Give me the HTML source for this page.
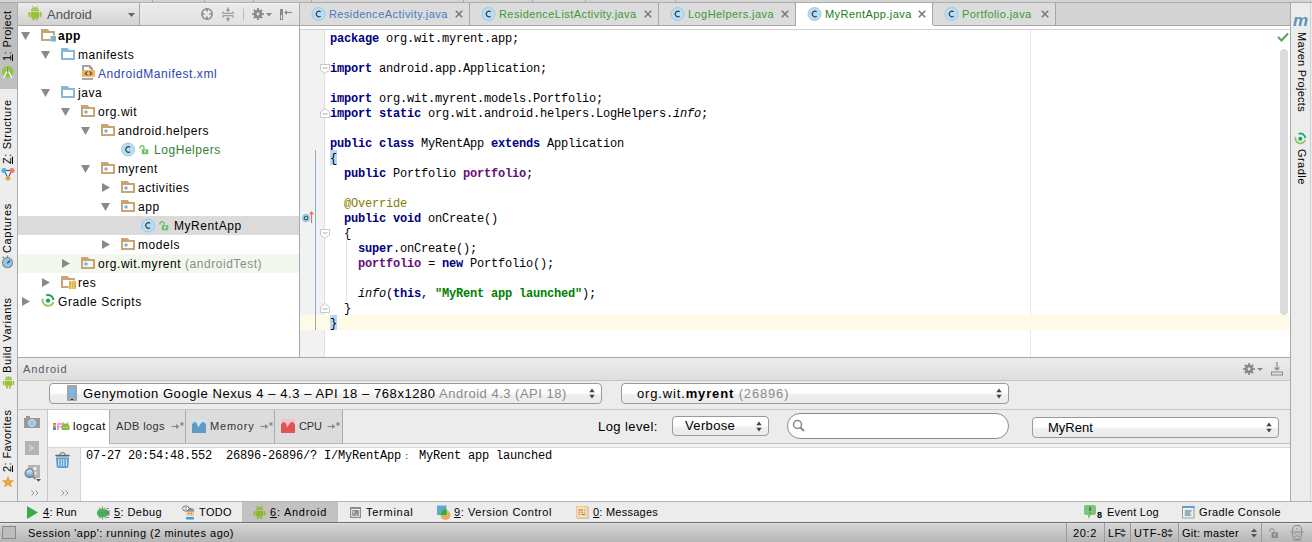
<!DOCTYPE html><html><head><meta charset="utf-8"><style>

html,body{margin:0;padding:0}
body{width:1312px;height:542px;overflow:hidden;position:relative;background:#ececec;font-family:'Liberation Sans', sans-serif;font-size:12px;color:#000}
.ab{position:absolute}
.t{position:absolute;white-space:pre;line-height:1}
svg{position:absolute;overflow:visible}

</style></head><body>
<div class="ab" style="left:0px;top:0px;width:1312px;height:2px;background:#d4d4d4"></div>
<div class="ab" style="left:0px;top:2px;width:1312px;height:1px;background:#acacac"></div>
<div class="ab" style="left:152px;top:0px;width:1px;height:2px;background:#aaaaaa"></div>
<div class="ab" style="left:204px;top:0px;width:1px;height:2px;background:#aaaaaa"></div>
<div class="ab" style="left:253px;top:0px;width:1px;height:2px;background:#aaaaaa"></div>
<div class="ab" style="left:311px;top:0px;width:1px;height:2px;background:#aaaaaa"></div>
<div class="ab" style="left:463px;top:0px;width:1px;height:2px;background:#aaaaaa"></div>
<div class="ab" style="left:532px;top:0px;width:1px;height:2px;background:#aaaaaa"></div>
<div class="ab" style="left:585px;top:0px;width:1px;height:2px;background:#aaaaaa"></div>
<div class="ab" style="left:675px;top:0px;width:1px;height:2px;background:#aaaaaa"></div>
<div class="ab" style="left:0px;top:3px;width:17px;height:498px;background:#ececec"></div>
<div class="ab" style="left:17px;top:3px;width:1px;height:498px;background:#acacac"></div>
<div class="ab" style="left:0px;top:3px;width:17px;height:86px;background:#c0c0c0"></div>
<div class="ab" style="left:18px;top:3px;width:282px;height:22px;background:linear-gradient(#ebebeb,#e2e2e2)"></div>
<div class="ab" style="left:18px;top:3px;width:282px;height:1px;background:#f6f6f6"></div>
<div class="ab" style="left:18px;top:25px;width:282px;height:1px;background:#a8a8a8"></div>
<div class="ab" style="left:18px;top:26px;width:281px;height:331px;background:#fff"></div>
<div class="ab" style="left:299px;top:3px;width:1px;height:354px;background:#a8a8a8"></div>
<div class="ab" style="left:18px;top:216px;width:281px;height:19px;background:#dbdbdb"></div>
<div class="ab" style="left:18px;top:254px;width:281px;height:19px;background:#f2f8ee"></div>
<svg style="left:21px;top:32px" width="9" height="8" viewBox="0 0 9 8"><path d="M0 0H9L4.5 8Z" fill="#8a8a8a"/></svg>
<svg style="left:41px;top:29px" width="16" height="14" viewBox="0 0 16 14"><path d="M0 0H6.5L8.5 2H14V12H0ZM2 4V10H12V4Z" fill="#c9a575" fill-rule="evenodd"/><rect x="9" y="6.5" width="6" height="6" fill="#fff"/><rect x="9.5" y="7" width="5.5" height="5.5" fill="#7ab3d6"/></svg>
<div class="t" style="left:58px;top:30px;font-size:12px;letter-spacing:0.55px;font-weight:bold">app</div>
<svg style="left:41px;top:51px" width="9" height="8" viewBox="0 0 9 8"><path d="M0 0H9L4.5 8Z" fill="#8a8a8a"/></svg>
<svg style="left:61px;top:48px" width="15" height="13" viewBox="0 0 15 13"><path d="M0 0H6.5L8.5 2H14V12H0ZM2 4V10H12V4Z" fill="#86b8d8" fill-rule="evenodd"/></svg>
<div class="t" style="left:78px;top:49px;font-size:12px;letter-spacing:0.55px;">manifests</div>
<svg style="left:82px;top:65px" width="14" height="16" viewBox="0 0 14 16"><path d="M0 0H8L11 3V5H9V4H7V2H2V5H0Z" fill="#a4a4a4"/><rect x="0" y="5" width="13" height="6.8" fill="#f2b458"/><path d="M5.4 6.4L3.3 8.4L5.4 10.4M7.6 6.4L9.7 8.4L7.6 10.4" fill="none" stroke="#4a4a4a" stroke-width="1.2"/><rect x="0" y="12.9" width="11" height="2" fill="#a4a4a4"/></svg>
<div class="t" style="left:98px;top:68px;font-size:12px;letter-spacing:0.55px;color:#2846b4">AndroidManifest.xml</div>
<svg style="left:41px;top:89px" width="9" height="8" viewBox="0 0 9 8"><path d="M0 0H9L4.5 8Z" fill="#8a8a8a"/></svg>
<svg style="left:61px;top:86px" width="15" height="13" viewBox="0 0 15 13"><path d="M0 0H6.5L8.5 2H14V12H0ZM2 4V10H12V4Z" fill="#86b8d8" fill-rule="evenodd"/></svg>
<div class="t" style="left:78px;top:87px;font-size:12px;letter-spacing:0.55px;">java</div>
<svg style="left:61px;top:108px" width="9" height="8" viewBox="0 0 9 8"><path d="M0 0H9L4.5 8Z" fill="#8a8a8a"/></svg>
<svg style="left:81px;top:105px" width="15" height="13" viewBox="0 0 15 13"><path d="M0 0H6.5L8.5 2H14V12H0ZM2 4V10H12V4Z" fill="#c9a575" fill-rule="evenodd"/><circle cx="5" cy="7" r="1.8" fill="#80b2d6"/></svg>
<div class="t" style="left:98px;top:106px;font-size:12px;letter-spacing:0.55px;">org.wit</div>
<svg style="left:81px;top:127px" width="9" height="8" viewBox="0 0 9 8"><path d="M0 0H9L4.5 8Z" fill="#8a8a8a"/></svg>
<svg style="left:101px;top:124px" width="15" height="13" viewBox="0 0 15 13"><path d="M0 0H6.5L8.5 2H14V12H0ZM2 4V10H12V4Z" fill="#c9a575" fill-rule="evenodd"/><circle cx="5" cy="7" r="1.8" fill="#80b2d6"/></svg>
<div class="t" style="left:118px;top:125px;font-size:12px;letter-spacing:0.55px;">android.helpers</div>
<svg style="left:121px;top:142px" width="15" height="15" viewBox="0 0 15 15"><circle cx="7" cy="7.5" r="6.5" fill="#b8def4" stroke="#94cbee" stroke-width="1"/><path d="M9.2 5.4A2.7 2.7 0 1 0 9.2 9.6" fill="none" stroke="#3a3a3a" stroke-width="1.1"/></svg>
<svg style="left:139px;top:145px" width="10" height="10" viewBox="0 0 10 10"><path d="M1 3.5V2.6A2 2 0 0 1 5 2.6V4.5" fill="none" stroke="#6cbf6c" stroke-width="1.3"/><rect x="2.8" y="4.3" width="6.5" height="5" rx="0.8" fill="#6cbf6c"/><path d="M5.2 5.9H6.9M6.05 5.9V7.9" stroke="#fff" stroke-width="0.9"/></svg>
<div class="t" style="left:154px;top:144px;font-size:12px;letter-spacing:0.55px;color:#2f7f2f">LogHelpers</div>
<svg style="left:81px;top:165px" width="9" height="8" viewBox="0 0 9 8"><path d="M0 0H9L4.5 8Z" fill="#8a8a8a"/></svg>
<svg style="left:101px;top:162px" width="15" height="13" viewBox="0 0 15 13"><path d="M0 0H6.5L8.5 2H14V12H0ZM2 4V10H12V4Z" fill="#c9a575" fill-rule="evenodd"/><circle cx="5" cy="7" r="1.8" fill="#80b2d6"/></svg>
<div class="t" style="left:118px;top:163px;font-size:12px;letter-spacing:0.55px;">myrent</div>
<svg style="left:102px;top:183px" width="8" height="9" viewBox="0 0 8 9"><path d="M0 0V9L8 4.5Z" fill="#8a8a8a"/></svg>
<svg style="left:121px;top:181px" width="15" height="13" viewBox="0 0 15 13"><path d="M0 0H6.5L8.5 2H14V12H0ZM2 4V10H12V4Z" fill="#c9a575" fill-rule="evenodd"/><circle cx="5" cy="7" r="1.8" fill="#80b2d6"/></svg>
<div class="t" style="left:138px;top:182px;font-size:12px;letter-spacing:0.55px;">activities</div>
<svg style="left:101px;top:203px" width="9" height="8" viewBox="0 0 9 8"><path d="M0 0H9L4.5 8Z" fill="#8a8a8a"/></svg>
<svg style="left:121px;top:200px" width="15" height="13" viewBox="0 0 15 13"><path d="M0 0H6.5L8.5 2H14V12H0ZM2 4V10H12V4Z" fill="#c9a575" fill-rule="evenodd"/><circle cx="5" cy="7" r="1.8" fill="#80b2d6"/></svg>
<div class="t" style="left:138px;top:201px;font-size:12px;letter-spacing:0.55px;">app</div>
<svg style="left:141px;top:218px" width="15" height="15" viewBox="0 0 15 15"><circle cx="7" cy="7.5" r="6.5" fill="#b8def4" stroke="#94cbee" stroke-width="1"/><path d="M9.2 5.4A2.7 2.7 0 1 0 9.2 9.6" fill="none" stroke="#3a3a3a" stroke-width="1.1"/></svg>
<svg style="left:159px;top:221px" width="10" height="10" viewBox="0 0 10 10"><path d="M1 3.5V2.6A2 2 0 0 1 5 2.6V4.5" fill="none" stroke="#6cbf6c" stroke-width="1.3"/><rect x="2.8" y="4.3" width="6.5" height="5" rx="0.8" fill="#6cbf6c"/><path d="M5.2 5.9H6.9M6.05 5.9V7.9" stroke="#fff" stroke-width="0.9"/></svg>
<div class="t" style="left:174px;top:220px;font-size:12px;letter-spacing:0.55px;">MyRentApp</div>
<svg style="left:102px;top:240px" width="8" height="9" viewBox="0 0 8 9"><path d="M0 0V9L8 4.5Z" fill="#8a8a8a"/></svg>
<svg style="left:121px;top:238px" width="15" height="13" viewBox="0 0 15 13"><path d="M0 0H6.5L8.5 2H14V12H0ZM2 4V10H12V4Z" fill="#c9a575" fill-rule="evenodd"/><circle cx="5" cy="7" r="1.8" fill="#80b2d6"/></svg>
<div class="t" style="left:138px;top:239px;font-size:12px;letter-spacing:0.55px;">models</div>
<svg style="left:62px;top:259px" width="8" height="9" viewBox="0 0 8 9"><path d="M0 0V9L8 4.5Z" fill="#8a8a8a"/></svg>
<svg style="left:81px;top:257px" width="15" height="13" viewBox="0 0 15 13"><path d="M0 0H6.5L8.5 2H14V12H0ZM2 4V10H12V4Z" fill="#c9a575" fill-rule="evenodd"/><circle cx="5" cy="7" r="1.8" fill="#80b2d6"/></svg>
<div class="t" style="left:98px;top:258px;font-size:12px;letter-spacing:0.55px;">org.wit.myrent <span style="color:#8c8c8c">(androidTest)</span></div>
<svg style="left:42px;top:278px" width="8" height="9" viewBox="0 0 8 9"><path d="M0 0V9L8 4.5Z" fill="#8a8a8a"/></svg>
<svg style="left:61px;top:276px" width="16" height="14" viewBox="0 0 16 14"><path d="M0 0H6.5L8.5 2H14V12H0ZM2 4V10H12V4Z" fill="#c9a575" fill-rule="evenodd"/><rect x="7.5" y="4.5" width="8" height="9" fill="#fff"/><rect x="8" y="5" width="7" height="8" fill="#f0b428"/><path d="M8 7.6H15M8 10.4H15" stroke="#a8a8a8" stroke-width="0.9"/><path d="M10.5 5V13M12.5 5V13" stroke="#ffe890" stroke-width="0.6"/></svg>
<div class="t" style="left:78px;top:277px;font-size:12px;letter-spacing:0.55px;">res</div>
<svg style="left:22px;top:297px" width="8" height="9" viewBox="0 0 8 9"><path d="M0 0V9L8 4.5Z" fill="#8a8a8a"/></svg>
<svg style="left:41px;top:293px" width="15" height="15" viewBox="0 0 15 15"><path d="M5.08 2.34A5.6 5.6 0 0 1 12.58 7.11" fill="none" stroke="#1aa860" stroke-width="2"/><path d="M12.41 9.05A5.6 5.6 0 0 1 1.74 5.68" fill="none" stroke="#8cc864" stroke-width="2"/><circle cx="7" cy="7.6" r="2.2" fill="#1aa860"/></svg>
<div class="t" style="left:58px;top:296px;font-size:12px;letter-spacing:0.55px;">Gradle Scripts</div>
<div class="ab" style="left:18px;top:3px;width:122px;height:22px;background:linear-gradient(#ebebeb,#d2d2d2);border-right:1px solid #a8a8a8;box-sizing:border-box"></div>
<svg style="left:28px;top:5px" width="14" height="16" viewBox="0 0 14 16"><path d="M4.2 0.8L5.2 2.4M9.8 0.8L8.8 2.4" stroke="#9bc13b" stroke-width="0.9"/><path d="M3 6.2A4 4 0 0 1 11 6.2Z" fill="#9bc13b"/><circle cx="5.4" cy="4.4" r="0.6" fill="#eee"/><circle cx="8.6" cy="4.4" r="0.6" fill="#eee"/><rect x="3" y="7" width="8" height="6.3" rx="0.6" fill="#9bc13b"/><rect x="0.4" y="7" width="2" height="5.3" rx="1" fill="#9bc13b"/><rect x="11.6" y="7" width="2" height="5.3" rx="1" fill="#9bc13b"/><rect x="4.4" y="12.5" width="1.9" height="3" rx="0.5" fill="#9bc13b"/><rect x="7.7" y="12.5" width="1.9" height="3" rx="0.5" fill="#9bc13b"/></svg>
<div class="t" style="left:47px;top:8px;font-size:13px;color:#505058">Android</div>
<svg style="left:128px;top:13px" width="7" height="4" viewBox="0 0 7 4"><path d="M0 0H7L3.5 4Z" fill="#666"/></svg>
<svg style="left:201px;top:8px" width="12" height="12" viewBox="0 0 12 12"><circle cx="6" cy="6" r="5.2" fill="none" stroke="#8a8a8a" stroke-width="1.5"/><path d="M6 1V3.6M6 8.4V11M1 6H3.6M8.4 6H11" stroke="#8a8a8a" stroke-width="1.7"/></svg>
<svg style="left:222px;top:7px" width="12" height="15" viewBox="0 0 12 15"><path d="M1 4.5V6.3H11V4.5M1 10.5V8.7H11V10.5" fill="none" stroke="#8a8a8a" stroke-width="1.1"/><path d="M6 0.5V4M6 11V14.5" stroke="#8a8a8a" stroke-width="1.1"/><path d="M3.8 2.6H8.2L6 5ZM3.8 12.4H8.2L6 10Z" fill="#8a8a8a"/></svg>
<div class="ab" style="left:243px;top:7px;width:1px;height:15px;background:linear-gradient(#e4e4e4,#b8b8b8 30%,#b8b8b8 70%,#e4e4e4)"></div>
<svg style="left:252px;top:8px" width="12" height="12" viewBox="0 0 12 12"><path d="M10.31 5.13 L11.93 5.10 L11.93 6.90 L10.31 6.87 L9.67 8.43 L10.83 9.56 L9.56 10.83 L8.43 9.67 L6.87 10.31 L6.90 11.93 L5.10 11.93 L5.13 10.31 L3.57 9.67 L2.44 10.83 L1.17 9.56 L2.33 8.43 L1.69 6.87 L0.07 6.90 L0.07 5.10 L1.69 5.13 L2.33 3.57 L1.17 2.44 L2.44 1.17 L3.57 2.33 L5.13 1.69 L5.10 0.07 L6.90 0.07 L6.87 1.69 L8.43 2.33 L9.56 1.17 L10.83 2.44 L9.67 3.57Z" fill="#8a8a8a"/><circle cx="6" cy="6" r="1.4" fill="#e6e6e6"/></svg>
<svg style="left:266px;top:13px" width="6" height="3.5" viewBox="0 0 6 3.5"><path d="M0 0H6L3 3.5Z" fill="#8a8a8a"/></svg>
<svg style="left:280px;top:9px" width="13" height="12" viewBox="0 0 13 12"><rect x="0" y="0" width="3" height="11" fill="#8a8a8a"/><rect x="1" y="6" width="1" height="4" fill="#f0f0f0"/><path d="M5 3.5H12" stroke="#8a8a8a" stroke-width="1.2"/><path d="M4 3.5L7 1V6Z" fill="#8a8a8a"/></svg>
<div class="ab" style="left:300px;top:3px;width:991px;height:22px;background:#d3d3d3"></div>
<div class="ab" style="left:300px;top:25px;width:991px;height:1px;background:#a8a8a8"></div>
<div class="ab" style="left:300px;top:26px;width:991px;height:3px;background:#ffffff"></div>
<div class="ab" style="left:300px;top:29px;width:991px;height:1px;background:#d0d0d0"></div>
<div class="ab" style="left:300px;top:30px;width:991px;height:327px;background:#fff"></div>
<div class="ab" style="left:300px;top:3px;width:170px;height:22px;background:#dcdcdc"></div>
<div class="ab" style="left:469px;top:3px;width:1px;height:22px;background:#a8a8a8"></div>
<svg style="left:311px;top:7px" width="15" height="15" viewBox="0 0 15 15"><circle cx="7.5" cy="7" r="6.5" fill="#b8def4" stroke="#94cbee" stroke-width="1"/><path d="M9.7 4.9A2.7 2.7 0 1 0 9.7 9.1" fill="none" stroke="#3a3a3a" stroke-width="1.1"/></svg>
<div class="t" style="left:329px;top:9px;font-size:11px;letter-spacing:0.43px;color:#4a78c0">ResidenceActivity.java</div>
<svg style="left:455px;top:10.3px" width="8" height="8" viewBox="0 0 8 8"><path d="M0.8 0.8L7.2 7.2M7.2 0.8L0.8 7.2" stroke="#7a7a7a" stroke-width="1.6"/></svg>
<div class="ab" style="left:470px;top:3px;width:189px;height:22px;background:#dcdcdc"></div>
<div class="ab" style="left:658px;top:3px;width:1px;height:22px;background:#a8a8a8"></div>
<svg style="left:481px;top:7px" width="15" height="15" viewBox="0 0 15 15"><circle cx="7.5" cy="7" r="6.5" fill="#b8def4" stroke="#94cbee" stroke-width="1"/><path d="M9.7 4.9A2.7 2.7 0 1 0 9.7 9.1" fill="none" stroke="#3a3a3a" stroke-width="1.1"/></svg>
<div class="t" style="left:499px;top:9px;font-size:11px;letter-spacing:0.43px;color:#3a9a3a">ResidenceListActivity.java</div>
<svg style="left:644px;top:10.3px" width="8" height="8" viewBox="0 0 8 8"><path d="M0.8 0.8L7.2 7.2M7.2 0.8L0.8 7.2" stroke="#7a7a7a" stroke-width="1.6"/></svg>
<div class="ab" style="left:659px;top:3px;width:137px;height:22px;background:#dcdcdc"></div>
<div class="ab" style="left:795px;top:3px;width:1px;height:22px;background:#a8a8a8"></div>
<svg style="left:670px;top:7px" width="15" height="15" viewBox="0 0 15 15"><circle cx="7.5" cy="7" r="6.5" fill="#b8def4" stroke="#94cbee" stroke-width="1"/><path d="M9.7 4.9A2.7 2.7 0 1 0 9.7 9.1" fill="none" stroke="#3a3a3a" stroke-width="1.1"/></svg>
<div class="t" style="left:688px;top:9px;font-size:11px;letter-spacing:0.43px;color:#3a9a3a">LogHelpers.java</div>
<svg style="left:781px;top:10.3px" width="8" height="8" viewBox="0 0 8 8"><path d="M0.8 0.8L7.2 7.2M7.2 0.8L0.8 7.2" stroke="#7a7a7a" stroke-width="1.6"/></svg>
<div class="ab" style="left:796px;top:3px;width:137px;height:26px;background:#ffffff"></div>
<div class="ab" style="left:932px;top:3px;width:1px;height:22px;background:#a8a8a8"></div>
<svg style="left:807px;top:7px" width="15" height="15" viewBox="0 0 15 15"><circle cx="7.5" cy="7" r="6.5" fill="#b8def4" stroke="#94cbee" stroke-width="1"/><path d="M9.7 4.9A2.7 2.7 0 1 0 9.7 9.1" fill="none" stroke="#3a3a3a" stroke-width="1.1"/></svg>
<div class="t" style="left:825px;top:9px;font-size:11px;letter-spacing:0.43px;color:#1a7a1a">MyRentApp.java</div>
<svg style="left:918px;top:10.3px" width="8" height="8" viewBox="0 0 8 8"><path d="M0.8 0.8L7.2 7.2M7.2 0.8L0.8 7.2" stroke="#7a7a7a" stroke-width="1.6"/></svg>
<div class="ab" style="left:933px;top:3px;width:123px;height:22px;background:#dcdcdc"></div>
<div class="ab" style="left:1055px;top:3px;width:1px;height:22px;background:#a8a8a8"></div>
<svg style="left:944px;top:7px" width="15" height="15" viewBox="0 0 15 15"><circle cx="7.5" cy="7" r="6.5" fill="#b8def4" stroke="#94cbee" stroke-width="1"/><path d="M9.7 4.9A2.7 2.7 0 1 0 9.7 9.1" fill="none" stroke="#3a3a3a" stroke-width="1.1"/></svg>
<div class="t" style="left:962px;top:9px;font-size:11px;letter-spacing:0.43px;color:#3a9a3a">Portfolio.java</div>
<svg style="left:1041px;top:10.3px" width="8" height="8" viewBox="0 0 8 8"><path d="M0.8 0.8L7.2 7.2M7.2 0.8L0.8 7.2" stroke="#7a7a7a" stroke-width="1.6"/></svg>
<div class="ab" style="left:299px;top:3px;width:1px;height:22px;background:#a8a8a8"></div>
<div class="ab" style="left:300px;top:30px;width:24px;height:327px;background:#f2f2f2"></div>
<div class="ab" style="left:324px;top:30px;width:1px;height:327px;background:#e0e0e0"></div>
<div class="ab" style="left:1030px;top:30px;width:1px;height:327px;background:#e8e8e8"></div>
<div class="ab" style="left:300px;top:315px;width:990px;height:15px;background:#fffae8"></div>
<div class="ab" style="left:330px;top:150px;width:7px;height:15px;background:#b8d8f8"></div>
<div class="ab" style="left:330px;top:315px;width:7px;height:15px;background:#b8d8f8"></div>
<div class="ab" style="left:346px;top:240px;width:1px;height:61px;background:#e2e2e2"></div>
<div class="t" style="left:330px;top:32px;font-family:'Liberation Mono', monospace;font-size:12px;letter-spacing:-0.2px;line-height:15px"><span style="color:#000080;font-weight:bold">package</span> org.wit.myrent.app;</div>
<div class="t" style="left:330px;top:62px;font-family:'Liberation Mono', monospace;font-size:12px;letter-spacing:-0.2px;line-height:15px"><span style="color:#000080;font-weight:bold">import</span> android.app.Application;</div>
<div class="t" style="left:330px;top:92px;font-family:'Liberation Mono', monospace;font-size:12px;letter-spacing:-0.2px;line-height:15px"><span style="color:#000080;font-weight:bold">import</span> org.wit.myrent.models.Portfolio;</div>
<div class="t" style="left:330px;top:107px;font-family:'Liberation Mono', monospace;font-size:12px;letter-spacing:-0.2px;line-height:15px"><span style="color:#000080;font-weight:bold">import</span> <span style="color:#000080;font-weight:bold">static</span> org.wit.android.helpers.LogHelpers.<i>info</i>;</div>
<div class="t" style="left:330px;top:137px;font-family:'Liberation Mono', monospace;font-size:12px;letter-spacing:-0.2px;line-height:15px"><span style="color:#000080;font-weight:bold">public</span> <span style="color:#000080;font-weight:bold">class</span> MyRentApp <span style="color:#000080;font-weight:bold">extends</span> Application</div>
<div class="t" style="left:330px;top:152px;font-family:'Liberation Mono', monospace;font-size:12px;letter-spacing:-0.2px;line-height:15px">{</div>
<div class="t" style="left:330px;top:167px;font-family:'Liberation Mono', monospace;font-size:12px;letter-spacing:-0.2px;line-height:15px">  <span style="color:#000080;font-weight:bold">public</span> Portfolio <span style="color:#660e7a;font-weight:bold">portfolio</span>;</div>
<div class="t" style="left:330px;top:197px;font-family:'Liberation Mono', monospace;font-size:12px;letter-spacing:-0.2px;line-height:15px">  <span style="color:#808000">@Override</span></div>
<div class="t" style="left:330px;top:212px;font-family:'Liberation Mono', monospace;font-size:12px;letter-spacing:-0.2px;line-height:15px">  <span style="color:#000080;font-weight:bold">public</span> <span style="color:#000080;font-weight:bold">void</span> onCreate()</div>
<div class="t" style="left:330px;top:227px;font-family:'Liberation Mono', monospace;font-size:12px;letter-spacing:-0.2px;line-height:15px">  {</div>
<div class="t" style="left:330px;top:242px;font-family:'Liberation Mono', monospace;font-size:12px;letter-spacing:-0.2px;line-height:15px">    <span style="color:#000080;font-weight:bold">super</span>.onCreate();</div>
<div class="t" style="left:330px;top:257px;font-family:'Liberation Mono', monospace;font-size:12px;letter-spacing:-0.2px;line-height:15px">    <span style="color:#660e7a;font-weight:bold">portfolio</span> = <span style="color:#000080;font-weight:bold">new</span> Portfolio();</div>
<div class="t" style="left:330px;top:287px;font-family:'Liberation Mono', monospace;font-size:12px;letter-spacing:-0.2px;line-height:15px">    <i>info</i>(<span style="color:#000080;font-weight:bold">this</span>, <span style="color:#008000;font-weight:bold">"MyRent app launched"</span>);</div>
<div class="t" style="left:330px;top:302px;font-family:'Liberation Mono', monospace;font-size:12px;letter-spacing:-0.2px;line-height:15px">  }</div>
<div class="t" style="left:330px;top:317px;font-family:'Liberation Mono', monospace;font-size:12px;letter-spacing:-0.2px;line-height:15px">}</div>
<div class="ab" style="left:315px;top:150px;width:1px;height:180px;background:#8aaccc"></div>
<svg style="left:320px;top:64px" width="10" height="10" viewBox="0 0 10 10"><path d="M0.5 0.5V6L5 9.5L9.5 6V0.5Z" fill="#fff" stroke="#c8c8c8"/><path d="M2.5 4H7.5" stroke="#aaa"/></svg>
<svg style="left:320px;top:108px" width="10" height="10" viewBox="0 0 10 10"><path d="M0.5 9.5V4L5 0.5L9.5 4V9.5Z" fill="#fff" stroke="#c8c8c8"/><path d="M2.5 6H7.5" stroke="#aaa"/></svg>
<svg style="left:320px;top:229px" width="10" height="10" viewBox="0 0 10 10"><path d="M0.5 0.5V6L5 9.5L9.5 6V0.5Z" fill="#fff" stroke="#c8c8c8"/><path d="M2.5 4H7.5" stroke="#aaa"/></svg>
<svg style="left:320px;top:303px" width="10" height="10" viewBox="0 0 10 10"><path d="M0.5 9.5V4L5 0.5L9.5 4V9.5Z" fill="#fff" stroke="#c8c8c8"/><path d="M2.5 6H7.5" stroke="#aaa"/></svg>
<svg style="left:301px;top:210px" width="14" height="14" viewBox="0 0 14 14"><circle cx="5" cy="8" r="4" fill="#86c8ee"/><circle cx="5" cy="8" r="1.7" fill="#a8e0ff" stroke="#555" stroke-width="1.1"/><path d="M10.5 13V3.5" stroke="#e07060" stroke-width="1.2"/><path d="M8 4.3L10.5 1L13 4.3Z" fill="#e07060"/></svg>
<svg style="left:1277px;top:32px" width="12" height="10" viewBox="0 0 12 10"><path d="M1 5L4.5 8.5L11 1.5" fill="none" stroke="#5aaa5a" stroke-width="2.2"/></svg>
<div class="ab" style="left:1280px;top:49px;width:8px;height:266px;background:#dcdcdc;border-radius:4px"></div>
<div class="ab" style="left:1290px;top:3px;width:1px;height:498px;background:#a8a8a8"></div>
<div class="ab" style="left:1291px;top:3px;width:21px;height:498px;background:#ececec"></div>
<div class="ab" style="left:1310px;top:3px;width:1px;height:498px;background:#d0d0d0"></div>
<div class="t" style="left:1293px;top:12px;font-size:17px;color:#5b92bb"><i><b>m</b></i></div>
<div class="t" style="left:1296px;top:31.5px;writing-mode:vertical-rl;font-size:11px;letter-spacing:0.3px">Maven Projects</div>
<svg style="left:1294px;top:132px" width="14" height="14" viewBox="0 0 14 14"><path d="M4.6 1.8A5 5 0 0 1 11.3 6.1" fill="none" stroke="#1aa860" stroke-width="1.8"/><path d="M11.2 7.9A5 5 0 0 1 1.6 4.9" fill="none" stroke="#8cc864" stroke-width="1.8"/><circle cx="6.3" cy="6.8" r="2" fill="#1aa860"/></svg>
<div class="t" style="left:1296px;top:149px;writing-mode:vertical-rl;font-size:11px;letter-spacing:0.45px">Gradle</div>
<div class="t" style="left:2px;top:61px;transform-origin:0 0;transform:rotate(-90deg);font-size:11px;letter-spacing:0.4px"><u>1</u>: Project</div>
<div class="t" style="left:2px;top:164px;transform-origin:0 0;transform:rotate(-90deg);font-size:11px;letter-spacing:0.6px"><u>Z</u>: Structure</div>
<div class="t" style="left:2px;top:252.5px;transform-origin:0 0;transform:rotate(-90deg);font-size:11px;letter-spacing:0.65px">Captures</div>
<div class="t" style="left:2px;top:373px;transform-origin:0 0;transform:rotate(-90deg);font-size:11px;letter-spacing:0.62px">Build Variants</div>
<div class="t" style="left:2px;top:472px;transform-origin:0 0;transform:rotate(-90deg);font-size:11px;letter-spacing:0.4px"><u>2</u>: Favorites</div>
<svg style="left:1px;top:65px" width="14" height="14" viewBox="0 0 14 14"><circle cx="6.7" cy="6.7" r="5.7" fill="#8dc63f"/><path d="M2.5 13L6.7 4.5L10.9 13" fill="none" stroke="#fafafa" stroke-width="1.4"/><path d="M6.7 3.2L5.5 6.5H7.9Z" fill="#666"/><rect x="6.1" y="2.2" width="1.2" height="1.2" fill="#777"/></svg>
<svg style="left:1px;top:167px" width="14" height="14" viewBox="0 0 14 14"><path d="M3 3.5H11M3 3.5L7 11M11 3.5L7 11" stroke="#444" stroke-width="1"/><circle cx="3" cy="3.5" r="2.6" fill="#5aaee0"/><circle cx="11" cy="3.5" r="2.6" fill="#ec7a7a"/><circle cx="7" cy="11.3" r="2.4" fill="#d8a45a"/></svg>
<svg style="left:1px;top:255px" width="14" height="14" viewBox="0 0 14 14"><circle cx="6.5" cy="7.7" r="5" fill="#8ccbf0" stroke="#8a8a8a" stroke-width="1.2"/><path d="M6.5 0.5V2.7M1.5 1.8L3 3.2" stroke="#8a8a8a" stroke-width="1.3"/><path d="M6.3 8.3L9 5.5" stroke="#445" stroke-width="1.3"/></svg>
<svg style="left:2px;top:375px" width="13" height="14" viewBox="0 0 13 14"><path d="M3 5A3.5 3.5 0 0 1 10 5Z" fill="#9bc13b"/><path d="M4 1.5L4.8 2.8M9 1.5L8.2 2.8" stroke="#9bc13b" stroke-width="0.8"/><rect x="3" y="5.8" width="7" height="5" fill="#9bc13b"/><rect x="0.8" y="5.8" width="1.7" height="4.5" rx="0.8" fill="#9bc13b"/><rect x="10.5" y="5.8" width="1.7" height="4.5" rx="0.8" fill="#9bc13b"/><rect x="4.2" y="10.5" width="1.7" height="3" fill="#9bc13b"/><rect x="7.1" y="10.5" width="1.7" height="3" fill="#9bc13b"/><circle cx="5" cy="3.7" r="0.5" fill="#fff"/><circle cx="8" cy="3.7" r="0.5" fill="#fff"/></svg>
<svg style="left:1px;top:475px" width="14" height="14" viewBox="0 0 14 14"><path d="M7 0.8L8.8 4.9L13.2 5.3L9.9 8.2L10.9 12.6L7 10.3L3.1 12.6L4.1 8.2L0.8 5.3L5.2 4.9Z" fill="#eba84a"/></svg>
<div class="ab" style="left:18px;top:357px;width:1273px;height:1px;background:#a8a8a8"></div>
<div class="ab" style="left:18px;top:358px;width:1273px;height:22px;background:linear-gradient(#ececec,#dedede)"></div>
<div class="ab" style="left:18px;top:380px;width:1273px;height:1px;background:#c4c4c4"></div>
<div class="t" style="left:23px;top:364px;font-size:11px;letter-spacing:0.95px;color:#5a5a66">Android</div>
<div class="ab" style="left:18px;top:381px;width:1273px;height:28px;background:#ececec"></div>
<div class="ab" style="left:18px;top:409px;width:1273px;height:1px;background:#c8c8c8"></div>
<div class="ab" style="left:49px;top:383px;width:553px;height:21px;background:linear-gradient(#ffffff 0%,#fdfdfd 45%,#eeeeee 60%,#ececec 100%);border:1px solid #9a9a9a;border-radius:4px;box-sizing:border-box"></div>
<svg style="left:589px;top:388.0px" width="6" height="11" viewBox="0 0 6 11"><path d="M0.3 4.2L3 0.5L5.7 4.2ZM0.3 6.8L3 10.5L5.7 6.8Z" fill="#444"/></svg>
<svg style="left:67px;top:385px" width="10" height="17" viewBox="0 0 10 17"><rect x="0" y="0" width="10" height="16" rx="1" fill="#a4a4a4"/><rect x="2" y="2.5" width="6" height="10.5" fill="#7ab8e0"/><rect x="4" y="14" width="2" height="1" fill="#222"/></svg>
<div class="t" style="left:83px;top:387px;font-size:13px;letter-spacing:0.566px">Genymotion Google Nexus 4 – 4.3 – API 18 – 768x1280</div>
<div class="t" style="left:439px;top:387px;font-size:13px;letter-spacing:0.5px;color:#8a8a8a">Android 4.3 (API 18)</div>
<div class="ab" style="left:621px;top:383px;width:388px;height:21px;background:linear-gradient(#ffffff 0%,#fdfdfd 45%,#eeeeee 60%,#ececec 100%);border:1px solid #9a9a9a;border-radius:4px;box-sizing:border-box"></div>
<svg style="left:996px;top:388.0px" width="6" height="11" viewBox="0 0 6 11"><path d="M0.3 4.2L3 0.5L5.7 4.2ZM0.3 6.8L3 10.5L5.7 6.8Z" fill="#444"/></svg>
<div class="t" style="left:637px;top:387px;font-size:13px;letter-spacing:0.85px">org.wit.<b>myrent</b> <span style="color:#8a8a8a">(26896)</span></div>
<div class="ab" style="left:18px;top:410px;width:29px;height:91px;background:#ececec"></div>
<div class="ab" style="left:47px;top:410px;width:1px;height:91px;background:#c8c8c8"></div>
<div class="ab" style="left:48px;top:410px;width:1242px;height:34px;background:#ececec"></div>
<div class="ab" style="left:109px;top:443px;width:1181px;height:1px;background:#c0c0c0"></div>
<div class="ab" style="left:48px;top:444px;width:1242px;height:3px;background:#f4f4f4"></div>
<div class="ab" style="left:48px;top:447px;width:1242px;height:1px;background:#d8d8d8"></div>
<div class="ab" style="left:48px;top:410px;width:61px;height:37px;background:#fff"></div>
<div class="ab" style="left:109px;top:410px;width:76px;height:34px;background:#dcdcdc;border-left:1px solid #acacac;border-bottom:1px solid #b8b8b8;box-sizing:border-box"></div>
<div class="ab" style="left:185px;top:410px;width:89px;height:34px;background:#dcdcdc;border-left:1px solid #acacac;border-bottom:1px solid #b8b8b8;box-sizing:border-box"></div>
<div class="ab" style="left:274px;top:410px;width:69px;height:34px;background:#dcdcdc;border-left:1px solid #acacac;border-bottom:1px solid #b8b8b8;box-sizing:border-box"></div>
<div class="ab" style="left:342px;top:410px;width:1px;height:34px;background:#acacac"></div>
<svg style="left:53px;top:421px" width="17" height="10" viewBox="0 0 17 10"><defs><linearGradient id="rb" x1="0" y1="0" x2="0" y2="1"><stop offset="0" stop-color="#e85050"/><stop offset="0.3" stop-color="#f0c040"/><stop offset="0.55" stop-color="#60c060"/><stop offset="0.8" stop-color="#5080e0"/><stop offset="1" stop-color="#a060c0"/></linearGradient></defs><rect x="0" y="2" width="3" height="7" fill="url(#rb)"/><path d="M4 2H10V4H6V5H9V6.5H6V9H4Z" fill="#f0a0e0"/><path d="M8.5 6A4 3.5 0 0 1 16.5 6V9H8.5Z" fill="#8ab840"/><path d="M9.5 1L11 3M15.5 1L14 3" stroke="#8ab840" stroke-width="0.9"/><circle cx="11" cy="6.3" r="0.6" fill="#fff"/><circle cx="14" cy="6.3" r="0.6" fill="#fff"/></svg>
<div class="t" style="left:73px;top:421px;font-size:11px;letter-spacing:0.6px">logcat</div>
<div class="t" style="left:116px;top:421px;font-size:11px;letter-spacing:0.39px;color:#333">ADB logs</div>
<svg style="left:171px;top:422px" width="13" height="8" viewBox="0 0 13 8"><path d="M0.5 4.5H7.5" stroke="#8a8a8a" stroke-width="1.1"/><path d="M5 2L8.5 4.5L5 7Z" fill="#8a8a8a"/><rect x="9.5" y="0.5" width="3" height="3" fill="#8a8a8a"/></svg>
<svg style="left:192px;top:419px" width="14" height="14" viewBox="0 0 14 14"><rect width="14" height="14" fill="#d2e4f0"/><path d="M0 14V5.5L1.5 3.5L2.5 2.5L3.5 4L4.5 3.5L6.2 8.5L8 5.5L10 3.2L11.5 3L13 4L14 6V14Z" fill="#5b9bc4"/></svg>
<div class="t" style="left:210px;top:421px;font-size:11px;letter-spacing:0.8px;color:#333">Memory</div>
<svg style="left:260px;top:422px" width="13" height="8" viewBox="0 0 13 8"><path d="M0.5 4.5H7.5" stroke="#8a8a8a" stroke-width="1.1"/><path d="M5 2L8.5 4.5L5 7Z" fill="#8a8a8a"/><rect x="9.5" y="0.5" width="3" height="3" fill="#8a8a8a"/></svg>
<svg style="left:281px;top:419px" width="14" height="14" viewBox="0 0 14 14"><rect width="14" height="14" fill="#f4c4c4"/><path d="M0 14V5.5L1.5 3.5L2.5 2.5L3.5 4L4.5 3.5L6.2 8.5L8 5.5L10 3.2L11.5 3L13 4L14 6V14Z" fill="#e05454"/></svg>
<div class="t" style="left:299px;top:421px;font-size:11px;letter-spacing:-0.2px;color:#333">CPU</div>
<svg style="left:327px;top:422px" width="13" height="8" viewBox="0 0 13 8"><path d="M0.5 4.5H7.5" stroke="#8a8a8a" stroke-width="1.1"/><path d="M5 2L8.5 4.5L5 7Z" fill="#8a8a8a"/><rect x="9.5" y="0.5" width="3" height="3" fill="#8a8a8a"/></svg>
<div class="t" style="left:598px;top:420px;font-size:13px;letter-spacing:0.42px">Log level:</div>
<div class="ab" style="left:672px;top:416px;width:97px;height:20px;background:linear-gradient(#ffffff 0%,#fdfdfd 45%,#eeeeee 60%,#ececec 100%);border:1px solid #9a9a9a;border-radius:4px;box-sizing:border-box"></div>
<svg style="left:756px;top:420.5px" width="6" height="11" viewBox="0 0 6 11"><path d="M0.3 4.2L3 0.5L5.7 4.2ZM0.3 6.8L3 10.5L5.7 6.8Z" fill="#444"/></svg>
<div class="t" style="left:685px;top:419px;font-size:13px;letter-spacing:0.35px">Verbose</div>
<div class="ab" style="left:787px;top:413px;width:222px;height:26px;background:#fff;border:1px solid #8c8c8c;border-radius:13px;box-sizing:border-box"></div>
<svg style="left:792px;top:419px" width="14" height="14" viewBox="0 0 14 14"><circle cx="5.5" cy="5.5" r="4" fill="none" stroke="#888" stroke-width="1.5"/><path d="M8.5 8.5L12 12" stroke="#888" stroke-width="2"/></svg>
<div class="ab" style="left:1032px;top:417px;width:247px;height:21px;background:linear-gradient(#ffffff 0%,#fdfdfd 45%,#eeeeee 60%,#ececec 100%);border:1px solid #9a9a9a;border-radius:4px;box-sizing:border-box"></div>
<svg style="left:1266px;top:422.0px" width="6" height="11" viewBox="0 0 6 11"><path d="M0.3 4.2L3 0.5L5.7 4.2ZM0.3 6.8L3 10.5L5.7 6.8Z" fill="#444"/></svg>
<div class="t" style="left:1048px;top:421px;font-size:13px">MyRent</div>
<svg style="left:1243px;top:363px" width="12" height="12" viewBox="0 0 12 12"><path d="M10.31 5.13 L11.93 5.10 L11.93 6.90 L10.31 6.87 L9.67 8.43 L10.83 9.56 L9.56 10.83 L8.43 9.67 L6.87 10.31 L6.90 11.93 L5.10 11.93 L5.13 10.31 L3.57 9.67 L2.44 10.83 L1.17 9.56 L2.33 8.43 L1.69 6.87 L0.07 6.90 L0.07 5.10 L1.69 5.13 L2.33 3.57 L1.17 2.44 L2.44 1.17 L3.57 2.33 L5.13 1.69 L5.10 0.07 L6.90 0.07 L6.87 1.69 L8.43 2.33 L9.56 1.17 L10.83 2.44 L9.67 3.57Z" fill="#8a8a8a"/><circle cx="6" cy="6" r="1.4" fill="#e6e6e6"/></svg>
<svg style="left:1257px;top:368px" width="6" height="3" viewBox="0 0 6 3"><path d="M0 0H6L3 3Z" fill="#888"/></svg>
<svg style="left:1271px;top:362px" width="12" height="14" viewBox="0 0 12 14"><path d="M6 0V8M3.5 5.5L6 8L8.5 5.5" fill="none" stroke="#888" stroke-width="1.2"/><rect x="0.5" y="10" width="11" height="3" fill="none" stroke="#888"/></svg>
<svg style="left:24px;top:416px" width="16" height="12" viewBox="0 0 16 12"><rect x="0" y="2" width="16" height="10" fill="#999"/><rect x="2" y="0" width="4" height="2" fill="#999"/><circle cx="8" cy="7" r="3.5" fill="#8ec8ee" stroke="#ddd"/></svg>
<div class="ab" style="left:25px;top:441px;width:14px;height:14px;background:#b4b4b4"></div>
<svg style="left:29px;top:444px" width="6" height="8" viewBox="0 0 6 8"><path d="M0 0V8L6 4Z" fill="#cacaca"/></svg>
<svg style="left:23px;top:464px" width="20" height="19" viewBox="0 0 20 19"><rect x="5" y="1" width="12" height="13" fill="#b4b4b4"/><rect x="10.5" y="3" width="3" height="3" fill="#f0f0f0"/><rect x="10.5" y="7.5" width="3" height="3" fill="#f0f0f0"/><defs><linearGradient id="lens" x1="0" y1="0" x2="0" y2="1"><stop offset="0" stop-color="#e8f4fc"/><stop offset="1" stop-color="#4a9ad8"/></linearGradient></defs><circle cx="6.5" cy="9.2" r="4.2" fill="url(#lens)" stroke="#8a8a8a" stroke-width="1.7"/><path d="M9.6 12.3L12.3 15" stroke="#8a8a8a" stroke-width="2"/><path d="M13 15H18L15.5 17.8Z" fill="#555"/></svg>
<svg style="left:31px;top:490px" width="8" height="6" viewBox="0 0 8 6"><path d="M0.5 0.5L3 3L0.5 5.5M4.5 0.5L7 3L4.5 5.5" fill="none" stroke="#8a8a8a" stroke-width="0.9"/></svg>
<div class="ab" style="left:48px;top:448px;width:32px;height:53px;background:#ebebeb"></div>
<div class="ab" style="left:80px;top:448px;width:1px;height:53px;background:#d4d4d4"></div>
<svg style="left:55px;top:452px" width="15" height="17" viewBox="0 0 15 17"><path d="M5.2 3V1.5A1 1 0 0 1 6.2 0.8H8.8A1 1 0 0 1 9.8 1.5V3" fill="none" stroke="#666" stroke-width="1"/><rect x="0.3" y="2.8" width="14.4" height="1.8" rx="0.8" fill="#666"/><path d="M1 5.4H14L13.4 14.6A1.5 1.5 0 0 1 11.9 16H3.1A1.5 1.5 0 0 1 1.6 14.6Z" fill="#5aa0d0"/><path d="M3.8 7V14.3M6.3 7V14.3M8.8 7V14.3M11.3 7V14.3" stroke="#eef6fc" stroke-width="0.9"/></svg>
<svg style="left:61px;top:490px" width="8" height="6" viewBox="0 0 8 6"><path d="M0.5 0.5L3 3L0.5 5.5M4.5 0.5L7 3L4.5 5.5" fill="none" stroke="#8a8a8a" stroke-width="0.9"/></svg>
<div class="ab" style="left:81px;top:448px;width:1209px;height:53px;background:#fff"></div>
<div class="ab" style="left:1290px;top:357px;width:1px;height:144px;background:#a8a8a8"></div>
<div class="t" style="left:86px;top:449px;font-family:'Liberation Mono', monospace;font-size:12px;letter-spacing:-0.2px;line-height:14px">07-27 20:54:48.552  26896-26896/? I/MyRentApp<span style="display:inline-block;width:11px;text-align:center;font-size:9px;color:#444">:</span> MyRent app launched</div>
<div class="ab" style="left:0px;top:501px;width:1312px;height:1px;background:#b4b4b4"></div>
<div class="ab" style="left:0px;top:502px;width:1312px;height:20px;background:#ececec"></div>
<div class="ab" style="left:242px;top:502px;width:96px;height:20px;background:#c2c2c2"></div>
<div class="ab" style="left:0px;top:522px;width:1312px;height:1px;background:#707070"></div>
<svg style="left:27px;top:506px" width="11" height="13" viewBox="0 0 11 13"><path d="M0 0V13L11 6.5Z" fill="#3aaa4a"/></svg>
<div class="t" style="left:43px;top:507px;font-size:11px;letter-spacing:0.26px"><u>4</u>: Run</div>
<div class="t" style="left:114px;top:507px;font-size:11px;letter-spacing:0.42px"><u>5</u>: Debug</div>
<div class="t" style="left:199px;top:507px;font-size:11px;letter-spacing:0.36px">TODO</div>
<div class="t" style="left:270px;top:507px;font-size:11px;letter-spacing:0.75px"><u>6</u>: Android</div>
<div class="t" style="left:366px;top:507px;font-size:11px;letter-spacing:0.74px">Terminal</div>
<div class="t" style="left:454px;top:507px;font-size:11px;letter-spacing:0.59px"><u>9</u>: Version Control</div>
<div class="t" style="left:593px;top:507px;font-size:11px;letter-spacing:0.24px"><u>0</u>: Messages</div>
<div class="t" style="left:1107px;top:507px;font-size:11px;letter-spacing:0.27px">Event Log</div>
<div class="t" style="left:1199px;top:507px;font-size:11px;letter-spacing:0.4px">Gradle Console</div>
<svg style="left:96px;top:505px" width="16" height="16" viewBox="0 0 16 16"><path d="M3 2.5L4.5 4M6.5 1.5V3.5M10 2.5L8.5 4M3 13.5L4.5 12M6.5 14.5V12.5M10 13.5L8.5 12" stroke="#777" stroke-width="0.9"/><path d="M11 3.5H13M10.5 12.5H13M12 6H14M12 10H14" stroke="#777" stroke-width="0.9"/><path d="M10 4L14 8L10 12L8.5 8Z" fill="#7a7a7a"/><ellipse cx="6" cy="8" rx="5" ry="4.6" fill="#45b45a"/><path d="M1.2 8H10.8" stroke="#3a9a4a" stroke-width="0.6"/></svg>
<svg style="left:182px;top:505px" width="16" height="16" viewBox="0 0 16 16"><rect x="4" y="12" width="8" height="2.5" rx="1" fill="#3aa0d8"/><path d="M4.5 5.5A3.8 3.8 0 0 1 12 5.5V11H4.5Z" fill="#f4c88c"/><path d="M4.2 6.5A4 3.5 0 0 1 12.2 6.5H4.2Z" fill="#909090"/><circle cx="6.8" cy="8.5" r="0.5" fill="#555"/><circle cx="9.5" cy="8.5" r="0.5" fill="#555"/><ellipse cx="3.8" cy="3.5" rx="3.2" ry="2.6" fill="#fff" stroke="#555" stroke-width="0.8"/><path d="M2.5 2.7H5M2.5 4.3H5" stroke="#555" stroke-width="0.6"/></svg>
<svg style="left:253px;top:505px" width="13" height="15" viewBox="0 0 13 15"><path d="M3.6 0.6L4.6 2.2M9.4 0.6L8.4 2.2" stroke="#8fb82f" stroke-width="0.9"/><path d="M2.8 5.3A3.7 3.5 0 0 1 10.2 5.3Z" fill="#8fb82f"/><circle cx="5" cy="3.8" r="0.5" fill="#ddd"/><circle cx="8" cy="3.8" r="0.5" fill="#ddd"/><rect x="2.8" y="6" width="7.4" height="5.4" rx="0.5" fill="#8fb82f"/><rect x="0.6" y="6" width="1.7" height="4.6" rx="0.8" fill="#8fb82f"/><rect x="10.7" y="6" width="1.7" height="4.6" rx="0.8" fill="#8fb82f"/><rect x="4.1" y="11" width="1.8" height="3" rx="0.6" fill="#8fb82f"/><rect x="7.1" y="11" width="1.8" height="3" rx="0.6" fill="#8fb82f"/></svg>
<svg style="left:350px;top:507px" width="12" height="12" viewBox="0 0 12 12"><rect x="0" y="0" width="11" height="11" fill="#8a8a8a"/><rect x="1.2" y="2" width="8.6" height="7.8" fill="#efefef"/><rect x="2.2" y="3" width="6.6" height="5.8" fill="#8a8a8a"/><path d="M3 4L4.6 5.2L3 6.4M5.5 7.3H7.2" fill="none" stroke="#f4f4f4" stroke-width="0.9"/></svg>
<svg style="left:437px;top:505px" width="15" height="16" viewBox="0 0 15 16"><defs><clipPath id="vc"><rect x="0" y="0" width="9.5" height="10"/></clipPath></defs><rect x="0" y="0.5" width="9.5" height="9.5" fill="#6aa6cc"/><circle cx="8.5" cy="10" r="5" fill="#e8ac5c"/><circle cx="9.5" cy="10" r="6" fill="#1cb844" clip-path="url(#vc)"/></svg>
<svg style="left:576px;top:506px" width="14" height="14" viewBox="0 0 14 14"><rect x="1" y="1" width="12" height="12" fill="#c8c8c8"/><rect x="0" y="0" width="12" height="12" fill="#f6c884"/><rect x="1.2" y="1.2" width="9.6" height="9.6" fill="#fbe0b8"/><path d="M2.5 4H7M8.3 4H9.3M2.5 6.2H4M5.2 6.2H7M8.3 6.2H9.3M2.5 8.4H4M5.2 8.4H9.3" stroke="#7a7a7a" stroke-width="1"/></svg>
<svg style="left:1084px;top:505px" width="18" height="16" viewBox="0 0 18 16"><rect x="0" y="0" width="12" height="10" rx="2" fill="#7cc47c"/><path d="M4 10L4 14L7 10Z" fill="#7cc47c"/><path d="M6 2V6M6 7.5V8.5" stroke="#2a6a2a" stroke-width="1.3"/></svg>
<div class="t" style="left:1097px;top:511px;font-size:9px;font-weight:bold">8</div>
<svg style="left:1182px;top:506px" width="13" height="13" viewBox="0 0 13 13"><rect x="0.5" y="0.5" width="11.5" height="11.5" fill="#f4f4f4" stroke="#9a9a9a"/><rect x="0" y="0" width="12.5" height="2" fill="#5aa0d0"/><rect x="2" y="3.5" width="8.5" height="7" fill="#cce6f6"/><path d="M3 5H9.5M3 7H8M3 9H9" stroke="#6a6a6a" stroke-width="0.9"/></svg>
<div class="ab" style="left:0px;top:523px;width:1312px;height:19px;background:linear-gradient(#d6d6d6,#b6b6b6)"></div>
<div class="ab" style="left:0px;top:523px;width:1312px;height:1px;background:#e2e2e2"></div>
<div class="ab" style="left:2px;top:526px;width:14px;height:13px;background:#bdbdbd;border:1px solid #888;box-sizing:border-box"></div>
<div class="t" style="left:28px;top:527.5px;font-size:11px;letter-spacing:0.5px">Session 'app': running (2 minutes ago)</div>
<div class="ab" style="left:1066px;top:523px;width:1px;height:19px;background:#9a9a9a"></div>
<div class="ab" style="left:1104px;top:523px;width:1px;height:19px;background:#9a9a9a"></div>
<div class="ab" style="left:1130px;top:523px;width:1px;height:19px;background:#9a9a9a"></div>
<div class="ab" style="left:1178px;top:523px;width:1px;height:19px;background:#9a9a9a"></div>
<div class="ab" style="left:1261px;top:523px;width:1px;height:19px;background:#9a9a9a"></div>
<div class="t" style="left:1073px;top:527.5px;font-size:11px;letter-spacing:0.65px">20:2</div>
<div class="t" style="left:1108px;top:527.5px;font-size:11px;letter-spacing:0.3px">LF</div>
<div class="t" style="left:1134px;top:527.5px;font-size:11px;letter-spacing:0.57px">UTF-8</div>
<div class="t" style="left:1182px;top:527.5px;font-size:11px;letter-spacing:0.29px">Git: master</div>
<svg style="left:1120px;top:528px" width="6" height="10" viewBox="0 0 6 10"><path d="M0 4L3 0.5L6 4ZM0 6L3 9.5L6 6Z" fill="#555"/></svg>
<svg style="left:1167px;top:528px" width="6" height="10" viewBox="0 0 6 10"><path d="M0 4L3 0.5L6 4ZM0 6L3 9.5L6 6Z" fill="#555"/></svg>
<svg style="left:1251px;top:528px" width="6" height="10" viewBox="0 0 6 10"><path d="M0 4L3 0.5L6 4ZM0 6L3 9.5L6 6Z" fill="#555"/></svg>
<svg style="left:1269px;top:528px" width="11" height="11" viewBox="0 0 11 11"><path d="M0.8 3.8V2.8A2.1 2.1 0 0 1 5 2.8V4.5" fill="none" stroke="#8a8a8a" stroke-width="1"/><rect x="2.5" y="4.3" width="6.5" height="5.7" rx="1" fill="#8a8a8a"/><path d="M4.6 6.2H6.9M5.75 6.2V8.5" stroke="#cfcfcf" stroke-width="0.9"/></svg>
<svg style="left:1290px;top:525px" width="14" height="16" viewBox="0 0 14 16"><path d="M2.5 6.5V4A4.5 3.5 0 0 1 11.5 4V6.5" fill="none" stroke="#8a8a8a" stroke-width="1"/><path d="M0.3 7H13.7" stroke="#8a8a8a" stroke-width="1"/><path d="M7 3V4.8" stroke="#8a8a8a" stroke-width="0.9"/><path d="M2.5 7.5V10A4.5 4.5 0 0 0 11.5 10V7.5" fill="none" stroke="#8a8a8a" stroke-width="1"/><path d="M4.5 12L7 10.5L9.5 12M4.6 9H6M8 9H9.4" fill="none" stroke="#8a8a8a" stroke-width="0.9"/><path d="M3 15H11" stroke="#8a8a8a" stroke-width="1"/></svg>
</body></html>
